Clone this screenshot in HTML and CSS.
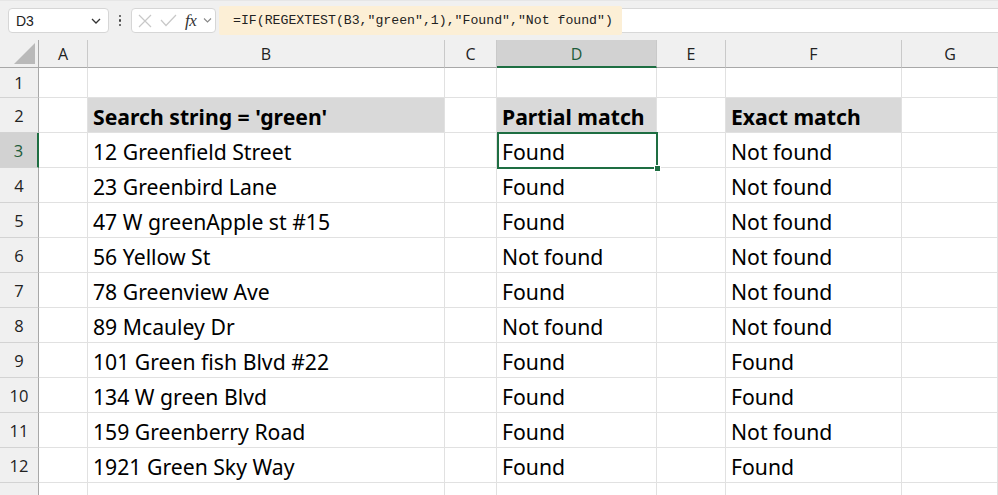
FILE: index.html
```html
<!DOCTYPE html>
<html>
<head>
<meta charset="utf-8">
<link rel="stylesheet" href="styles.css">
</head>
<body>
<div class="topbar">
  <div class="namebox"><span>D3</span>
    <svg class="chev" width="12" height="8" viewBox="0 0 12 8"><path d="M2 2 L6 6 L10 2" fill="none" stroke="#333" stroke-width="1.3"/></svg>
  </div>
  <div class="dots"><i></i><i></i><i></i></div>
  <div class="fxbox">
    <svg class="ico-x" width="14" height="14" viewBox="0 0 14 14"><path d="M1 1 L13 13 M13 1 L1 13" stroke="#c8c8c8" stroke-width="1.2"/></svg>
    <svg class="ico-v" width="17" height="13" viewBox="0 0 17 13"><path d="M1 6 L6 11.5 L16 1" fill="none" stroke="#c8c8c8" stroke-width="1.2"/></svg>
    <span class="fx">fx</span>
    <svg class="chev2" width="9" height="7" viewBox="0 0 9 7"><path d="M1 1.5 L4.5 5 L8 1.5" fill="none" stroke="#888" stroke-width="1.1"/></svg>
  </div>
  <div class="formula"><span class="ftext">=IF(REGEXTEST(B3,"green",1),"Found","Not found")</span></div>
</div>

<div class="sheet">
  <div class="corner"><div class="tri"></div></div>
  <div class="ch">A</div><div class="ch">B</div><div class="ch">C</div><div class="ch sel">D</div><div class="ch">E</div><div class="ch">F</div><div class="ch last">G</div>

  <div class="rh">1</div><div class="c"></div><div class="c"></div><div class="c"></div><div class="c"></div><div class="c"></div><div class="c"></div><div class="c"></div>

  <div class="rh">2</div><div class="c"></div><div class="c hd">Search string = 'green'</div><div class="c"></div><div class="c hd">Partial match</div><div class="c"></div><div class="c hd">Exact match</div><div class="c"></div>

  <div class="rh sel">3</div><div class="c"></div><div class="c">12 Greenfield Street</div><div class="c"></div><div class="c active">Found<div class="selbox"><div class="handle"></div></div></div><div class="c"></div><div class="c">Not found</div><div class="c"></div>

  <div class="rh">4</div><div class="c"></div><div class="c">23 Greenbird Lane</div><div class="c"></div><div class="c">Found</div><div class="c"></div><div class="c">Not found</div><div class="c"></div>

  <div class="rh">5</div><div class="c"></div><div class="c">47 W greenApple st #15</div><div class="c"></div><div class="c">Found</div><div class="c"></div><div class="c">Not found</div><div class="c"></div>

  <div class="rh">6</div><div class="c"></div><div class="c">56 Yellow St</div><div class="c"></div><div class="c">Not found</div><div class="c"></div><div class="c">Not found</div><div class="c"></div>

  <div class="rh">7</div><div class="c"></div><div class="c">78 Greenview Ave</div><div class="c"></div><div class="c">Found</div><div class="c"></div><div class="c">Not found</div><div class="c"></div>

  <div class="rh">8</div><div class="c"></div><div class="c">89 Mcauley Dr</div><div class="c"></div><div class="c">Not found</div><div class="c"></div><div class="c">Not found</div><div class="c"></div>

  <div class="rh">9</div><div class="c"></div><div class="c">101 Green fish Blvd #22</div><div class="c"></div><div class="c">Found</div><div class="c"></div><div class="c">Found</div><div class="c"></div>

  <div class="rh">10</div><div class="c"></div><div class="c">134 W green Blvd</div><div class="c"></div><div class="c">Found</div><div class="c"></div><div class="c">Found</div><div class="c"></div>

  <div class="rh">11</div><div class="c"></div><div class="c">159 Greenberry Road</div><div class="c"></div><div class="c">Found</div><div class="c"></div><div class="c">Not found</div><div class="c"></div>

  <div class="rh">12</div><div class="c"></div><div class="c">1921 Green Sky Way</div><div class="c"></div><div class="c">Found</div><div class="c"></div><div class="c">Found</div><div class="c"></div>

  <div class="rh">13</div><div class="c"></div><div class="c"></div><div class="c"></div><div class="c"></div><div class="c"></div><div class="c"></div><div class="c"></div>
</div>
</body>
</html>
```

FILE: styles.css
```css
* { box-sizing: border-box; }
html, body { margin: 0; padding: 0; }
body {
  width: 998px;
  height: 495px;
  overflow: hidden;
  background: #fff;
  font-family: "Noto Sans", "Open Sans", sans-serif;
}

.topbar {
  height: 40px;
  background: #f0f0f0;
  border-top: 1px solid #e6e6e6;
  display: flex;
  align-items: center;
  padding-left: 8px;
}
.namebox {
  width: 101px;
  height: 25px;
  background: #fff;
  border: 1px solid #d6d6d6;
  border-radius: 4px;
  display: flex;
  align-items: center;
  justify-content: space-between;
  padding: 0 6px 0 7px;
  font-family: "Liberation Sans", sans-serif;
  font-size: 14px;
  color: #222;
}
.namebox .chev { margin-top: 1px; }
.dots {
  width: 22px;
  display: flex;
  flex-direction: column;
  align-items: center;
  gap: 2px;
}
.dots i { width: 2.5px; height: 2.5px; background: #444; border-radius: 50%; display: block; }
.fxbox {
  width: 85px;
  height: 25px;
  background: #fff;
  border: 1px solid #d6d6d6;
  border-radius: 4px;
  display: flex;
  align-items: center;
  padding: 0 0 0 6px;
}
.ico-v { margin-left: 8px; }
.fx {
  font-family: "Liberation Serif", serif;
  font-style: italic;
  font-size: 17px;
  color: #333;
  margin-left: 8px;
  letter-spacing: -0.5px;
}
.chev2 { margin-left: 7px; }
.formula {
  flex: 1;
  height: 25px;
  margin-left: 3px;
  background: #fff;
  border-top: 1px solid #d8d8d8;
  border-bottom: 1px solid #d8d8d8;
  display: flex;
  align-items: center;
}
.ftext {
  background: #fcefd6;
  height: 29px;
  line-height: 29px;
  padding: 0 9px 0 14px;
  font-family: "Liberation Mono", monospace;
  font-size: 13.2px;
  color: #222;
  border-radius: 2px;
}

.sheet {
  display: grid;
  grid-template-columns: 39px 49px 357px 52px 160px 69px 176px 96px;
  grid-template-rows: 28px 30px repeat(11, 35px) 35px;
}
.corner {
  background: #f0f0f0;
  border-right: 1px solid #a8a8a8;
  border-bottom: 1px solid #a8a8a8;
  position: relative;
}
.tri {
  position: absolute;
  right: 3px;
  bottom: 3px;
  width: 0; height: 0;
  border-left: 21px solid transparent;
  border-bottom: 21px solid #b9b9b9;
}
.ch {
  background: #f0f0f0;
  border-right: 1px solid #c9c9c9;
  border-bottom: 1px solid #a8a8a8;
  display: flex;
  align-items: center;
  justify-content: center;
  font-family: "Open Sans", "Noto Sans", sans-serif;
  font-size: 16px;
  color: #222;
  padding-top: 1px;
}
.ch.last { border-right: none; }
.ch.sel {
  background: #d2d2d2;
  border-bottom: 2px solid #1e6e42;
  color: #1e5c3a;
  padding-top: 2px;
}
.rh {
  background: #f0f0f0;
  border-right: 1px solid #a8a8a8;
  border-bottom: 1px solid #d3d3d3;
  display: flex;
  align-items: center;
  justify-content: center;
  font-family: "Open Sans", "Noto Sans", sans-serif;
  font-size: 16.5px;
  color: #222;
}
.rh.sel {
  background: #d2d2d2;
  border-right: 2px solid #1e6e42;
  color: #1e5c3a;
}
.c {
  border-right: 1px solid #e1e1e1;
  border-bottom: 1px solid #e1e1e1;
  display: flex;
  align-items: center;
  padding: 2px 0 0 5px;
  font-family: "Noto Sans", sans-serif;
  font-size: 21.2px;
  color: #000;
  white-space: nowrap;
  position: relative;
}
.c.hd {
  background: #d9d9d9;
  font-weight: bold;
}
.c.active { z-index: 2; }
.selbox {
  position: absolute;
  left: 0;
  top: -1px;
  right: -2px;
  bottom: -2px;
  border: 2px solid #1e6e42;
}
.handle {
  position: absolute;
  right: -5px;
  bottom: -5px;
  width: 7px;
  height: 7px;
  background: #1e6e42;
  border: 1px solid #fff;
}
```
